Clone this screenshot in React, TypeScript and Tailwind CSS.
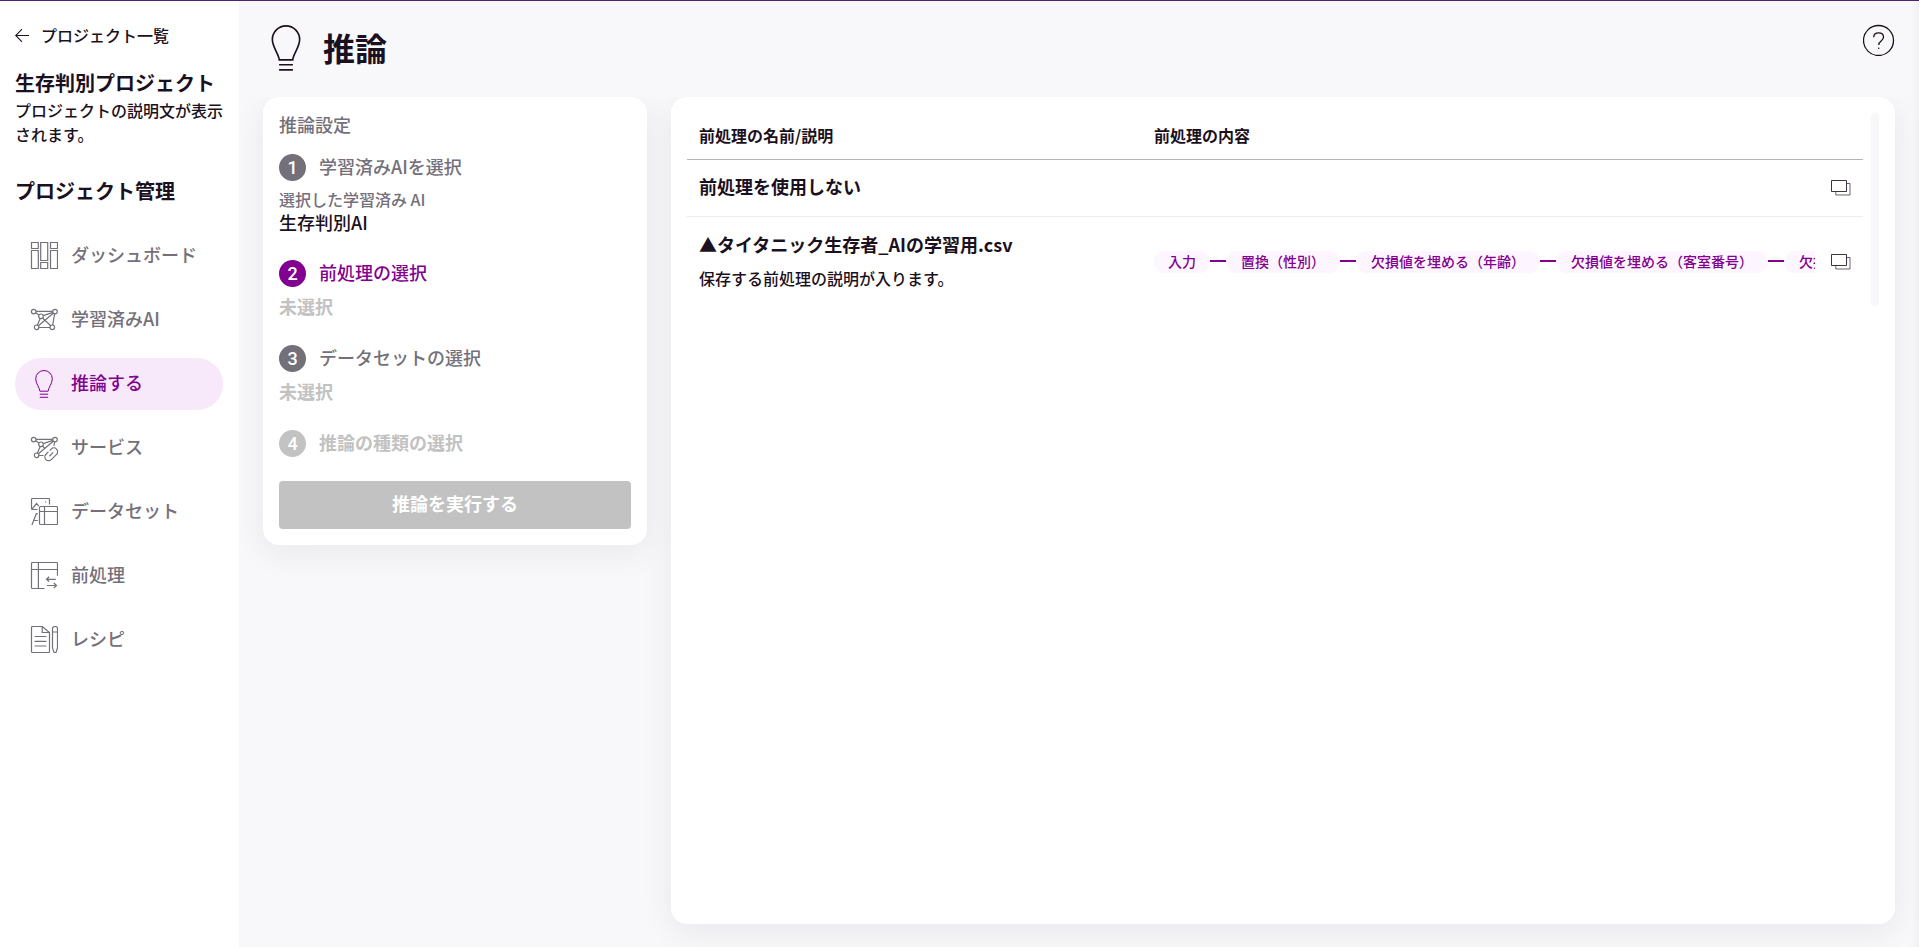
import React from "react";

type IconProps = { className?: string };

const stroke = { fill: "none", stroke: "currentColor" } as const;

function BackIcon() {
  return (
    <svg viewBox="0 0 14 14" className="h-[14px] w-[14px]" {...stroke} strokeWidth="1.1" aria-hidden="true">
      <path d="M14 6.500H.8M7 .2.700 6.500 7 12.800" />
    </svg>
  );
}

function BulbIcon({ className }: IconProps) {
  return (
    <svg viewBox="0 0 28 28" className={className} {...stroke} aria-hidden="true">
      <path d="M9.900 21.200c-.3-3.800-4.200-7.600-4.200-12.400a8.300 8.300 0 0 1 16.600 0c0 4.800-3.900 8.600-4.200 12.400zM9.800 24.200h8.400M9.800 27.300h8.400" />
    </svg>
  );
}

function DashboardIcon({ className }: IconProps) {
  return (
    <svg viewBox="0 0 28 28" className={className} {...stroke} strokeWidth="1.2" aria-hidden="true">
      <path d="M1.500.5h6.800v6H1.500zM1.500 8.500h6.800v18H1.500zM10.700.5h7v18h-7zM10.700 20.500h7v6h-7zM20.500.5h7v6h-7zM20.500 8.500h7v18h-7z" />
    </svg>
  );
}

function NetworkNodes({ linked }: { linked?: boolean }) {
  return (
    <>
      <circle cx="3.700" cy="5.600" r="2.300" />
      <circle cx="25" cy="5.600" r="2.300" />
      <circle cx="11" cy="10.300" r="2.300" />
      <circle cx="6.600" cy="21.300" r="2.300" />
      <path d="M6 5.400h16.700M5.700 6.800l3.300 2.200M13.200 9.600l9.700-3.200M10.200 12.500l-2.800 6.600M8.400 19.700 23.300 7.300" />
      {linked ? (
        <>
          <path d="M9 21.500h4.500M24.600 8l-.7 3.800M12.500 12l2.300 2.300" />
          <g transform="rotate(45 21.300 20.300)">
            <path d="M17.500 18.800v-2.100a3.800 3.800 0 0 1 7.600 0V24a3.800 3.800 0 0 1-7.600 0v-3.300M21.300 17.600v5.400" />
          </g>
        </>
      ) : (
        <>
          <circle cx="22.300" cy="21.300" r="2.300" />
          <path d="M9 21.500h11M24.600 8l-1.900 11M12.500 12l8.200 7.700" />
        </>
      )}
    </>
  );
}

function ModelIcon({ className }: IconProps) {
  return (
    <svg viewBox="0 0 28 28" className={className} {...stroke} strokeWidth="1.2" aria-hidden="true">
      <NetworkNodes />
    </svg>
  );
}

function ServiceIcon({ className }: IconProps) {
  return (
    <svg viewBox="0 0 28 28" className={className} {...stroke} strokeWidth="1.2" aria-hidden="true">
      <NetworkNodes linked />
    </svg>
  );
}

function DatasetIcon({ className }: IconProps) {
  return (
    <svg viewBox="0 0 28 28" className={className} {...stroke} strokeWidth="1.2" aria-hidden="true">
      <path d="M19.500 6.500v-5a1 1 0 0 0-1-1h-16a1 1 0 0 0-1 1v9a1 1 0 0 0 1 1h5M2.200 10.800 6.500 5.500l2.300 2.700M15 4h1.200" />
      <rect x="9.500" y="8.500" width="18" height="18" rx="1" />
      <path d="M9.500 13.500h18M14.500 8.500v18M1.900 27l4.400-11.300h1.500M4 22.500h3.800" />
    </svg>
  );
}

function PreprocessIcon({ className }: IconProps) {
  return (
    <svg viewBox="0 0 28 28" className={className} {...stroke} strokeWidth="1.2" aria-hidden="true">
      <path d="M27.500 13.700V1.500a1 1 0 0 0-1-1h-24a1 1 0 0 0-1 1v24a1 1 0 0 0 1 1h12M1.500 7.500h26M8.400.5v26" />
      <path d="M25.800 17.300h-9.300m2.700-2.500-2.700 2.500 2.700 2.500M17 23.500h9.500m-2.700-2.500 2.700 2.500-2.700 2.500" />
    </svg>
  );
}

function RecipeIcon({ className }: IconProps) {
  return (
    <svg viewBox="0 0 28 28" className={className} {...stroke} strokeWidth="1.2" aria-hidden="true">
      <path d="M12.200.5H2.500a1 1 0 0 0-1 1v24a1 1 0 0 0 1 1h16a1 1 0 0 0 1-1V6.500zM12.200.5v6h7.300M4.500 10.500h12M4.500 15.300h12M4.500 20h12" />
      <path d="M22.500 2.500a2.500 2 0 0 1 5 0V22l-1.500 4.500h-2L22.500 22zM22.500 6h5" />
    </svg>
  );
}

function HelpIcon() {
  return (
    <svg viewBox="0 0 32 32" className="h-8 w-8" {...stroke} strokeWidth="1.3" aria-hidden="true">
      <circle cx="15.500" cy="16.500" r="15" />
      <path d="M10.700 13.300c0-2.800 2-4.500 4.900-4.500s4.900 1.700 4.900 4.300c0 4.300-4.800 3.500-4.800 8" />
      <circle cx="15.700" cy="24.300" r=".8" fill="currentColor" stroke="none" />
    </svg>
  );
}

function WindowsIcon() {
  return (
    <svg viewBox="0 0 20 16" className="h-4 w-5" {...stroke} aria-hidden="true">
      <path d="M.5.5h15v11H.5z" strokeOpacity=".85" />
      <path d="M16 3.500h3v11.500H4.800v-3" strokeOpacity=".65" />
    </svg>
  );
}

const navItems = [
  { label: "ダッシュボード", Icon: DashboardIcon },
  { label: "学習済みAI", Icon: ModelIcon },
  { label: "推論する", Icon: BulbIcon, active: true },
  { label: "サービス", Icon: ServiceIcon },
  { label: "データセット", Icon: DatasetIcon },
  { label: "前処理", Icon: PreprocessIcon },
  { label: "レシピ", Icon: RecipeIcon },
];

const chips = [
  "置換（性別）",
  "欠損値を埋める（年齢）",
  "欠損値を埋める（客室番号）",
  "欠損値を埋める（乗船港）",
];

const tones = {
  done: { badge: "bg-[#74707a]", text: "font-medium text-[#74707a]" },
  current: { badge: "bg-[#82008f]", text: "font-medium text-[#82008f]" },
  disabled: { badge: "bg-[#c2c2c2]", text: "font-bold text-[#c2c2c2]" },
};

function Step({ n, title, tone, children }: { n: number; title: string; tone: keyof typeof tones; children?: React.ReactNode }) {
  return (
    <li>
      <div className="flex h-[27px] items-center gap-[13px]">
        <span className={`flex h-[27px] w-[27px] items-center justify-center rounded-full font-[Roboto] text-lg leading-none font-medium text-white ${tones[tone].badge}`}>
          {n}
        </span>
        <span className={`pb-0.5 text-lg leading-[25px] ${tones[tone].text}`}>{title}</span>
      </div>
      {children}
    </li>
  );
}

function Sidebar() {
  return (
    <aside className="w-[239px] shrink-0 bg-white px-[15px] pt-[23px]">
      <a href="#projects" className="flex h-6 items-center gap-3 text-base leading-[22px] font-medium">
        <BackIcon />
        <span className="pb-0.5">プロジェクト一覧</span>
      </a>
      <h2 className="mt-[22px] mb-0.5 text-xl leading-[26px] font-bold whitespace-nowrap">生存判別プロジェクト</h2>
      <p className="text-base leading-6 font-medium">プロジェクトの説明文が表示されます。</p>
      <h2 className="mt-[31px] text-xl leading-7 font-bold">プロジェクト管理</h2>
      <nav className="mt-[25px] mr-px">
        <ul className="flex flex-col gap-3">
          {navItems.map(({ label, Icon, active }) => (
            <li key={label}>
              <a
                href={`#${label}`}
                className={`flex h-[52px] items-center gap-[13px] rounded-full pl-[15px] text-lg font-medium ${active ? "bg-[#f7e8fa] text-[#82008f]" : "text-[#74707a]"}`}
              >
                <Icon className="h-7 w-7 shrink-0" />
                <span className="pb-1">{label}</span>
              </a>
            </li>
          ))}
        </ul>
      </nav>
    </aside>
  );
}

function Unselected() {
  return <p className="mt-1.5 mb-[25px] text-lg leading-[27px] font-bold text-[#c2c2c2]">未選択</p>;
}

function SettingsCard() {
  return (
    <section className="w-96 shrink-0 rounded-2xl bg-white p-4 shadow-[0_8px_32px_rgba(27,16,32,0.07)]">
      <h2 className="text-lg leading-[22px] font-medium text-[#74707a]">推論設定</h2>
      <ol className="mt-[19px] flex flex-col">
        <Step n={1} title="学習済みAIを選択" tone="done">
          <p className="mt-1.5 text-base leading-6 font-medium text-[#74707a]">選択した学習済み AI</p>
          <p className="mb-[27px] text-lg leading-[22px] font-medium">生存判別AI</p>
        </Step>
        <Step n={2} title="前処理の選択" tone="current">
          <Unselected />
        </Step>
        <Step n={3} title="データセットの選択" tone="done">
          <Unselected />
        </Step>
        <Step n={4} title="推論の種類の選択" tone="disabled" />
      </ol>
      <button type="button" disabled className="mt-6 h-12 w-full rounded bg-[#c2c2c2] pb-1 text-lg font-bold text-white">
        推論を実行する
      </button>
    </section>
  );
}

function Chip({ className, children }: { className: string; children: React.ReactNode }) {
  return <span className={`shrink-0 rounded-full bg-[#fdf5ff] pb-0.5 leading-5 ${className}`}>{children}</span>;
}

function OpenButton({ label }: { label: string }) {
  return (
    <button type="button" aria-label={label} className="block">
      <WindowsIcon />
    </button>
  );
}

function PreprocessTable() {
  return (
    <section className="min-w-0 flex-1 rounded-2xl bg-white p-4 shadow-[0_8px_32px_rgba(27,16,32,0.07)]">
      <div className="flex gap-2">
        <table className="w-full table-fixed border-separate border-spacing-0 text-left">
          <colgroup>
            <col className="w-[38.7%]" />
            <col />
            <col className="w-12" />
          </colgroup>
          <thead>
            <tr className="h-[47px] text-base">
              <th className="border-b border-[#b5b3b7] px-3 pb-0.5 font-bold">前処理の名前/説明</th>
              <th className="border-b border-[#b5b3b7] px-3 pb-0.5 font-bold">前処理の内容</th>
              <th className="border-b border-[#b5b3b7]" />
            </tr>
          </thead>
          <tbody>
            <tr className="h-[57px]">
              <td className="border-b border-[#ededed] px-3 pb-1 text-lg font-bold">前処理を使用しない</td>
              <td className="border-b border-[#ededed]" />
              <td className="border-b border-[#ededed] pl-4"><OpenButton label="前処理を使用しない" /></td>
            </tr>
            <tr className="h-[89px]">
              <td className="px-3 pb-[3px]">
                <p className="text-lg leading-[27px] font-bold">▲タイタニック生存者_AIの学習用.csv</p>
                <p className="mt-2 text-base leading-6 font-medium">保存する前処理の説明が入ります。</p>
              </td>
              <td className="pt-px pl-3">
                <div className="flex items-center overflow-hidden text-sm font-medium whitespace-nowrap text-[#82008f]">
                  <Chip className="px-[14px]">入力</Chip>
                  {chips.map((c) => (
                    <React.Fragment key={c}>
                      <span className="mb-0.5 h-0.5 w-4 shrink-0 bg-[#82008f]" />
                      <Chip className="px-[15px]">{c}</Chip>
                    </React.Fragment>
                  ))}
                </div>
              </td>
              <td className="pt-px pl-4"><OpenButton label="タイタニック生存者" /></td>
            </tr>
          </tbody>
        </table>
        <div className="w-2 shrink-0 rounded-full bg-[#f8f8fa]" />
      </div>
    </section>
  );
}

export default function App() {
  return (
    <div className="flex min-h-screen border-t border-[#4b2570] bg-[#f8f8fb] font-['Noto_Sans_CJK_JP',sans-serif] text-[#1b1020]">
      <Sidebar />
      <main className="flex min-w-0 flex-1 flex-col shadow-[inset_-12px_0_12px_-12px_rgba(27,16,32,0.06)]">
        <header className="flex h-24 items-start justify-between px-6">
          <div className="flex items-center gap-[14px] pt-6">
            <BulbIcon className="h-[46px] w-[46px]" />
            <h1 className="pb-0.5 text-[32px] leading-[44px] font-bold">推論</h1>
          </div>
          <button type="button" aria-label="ヘルプ" className="mt-[23px]">
            <HelpIcon />
          </button>
        </header>
        <div className="flex flex-1 items-stretch gap-6 overflow-hidden px-6 pb-[23px]">
          <div><SettingsCard /></div>
          <PreprocessTable />
        </div>
      </main>
    </div>
  );
}
